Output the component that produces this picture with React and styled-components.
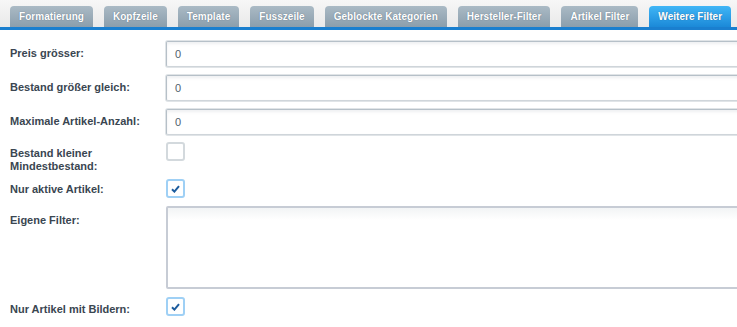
import React from "react";
import styled, { createGlobalStyle } from "styled-components";

const GlobalStyle = createGlobalStyle`
  html, body {
    margin: 0;
    padding: 0;
    background: #fff;
    overflow: hidden;
  }
  body {
    font-family: "Liberation Sans", Arial, sans-serif;
  }
`;

const Page = styled.div`
  width: 737px;
  height: 327px;
  overflow: hidden;
  background: #fff;
  font-family: "Liberation Sans", Arial, sans-serif;
`;

const TabBar = styled.div`
  display: flex;
  align-items: flex-end;
  height: 27px;
  padding-left: 10px;
  background: linear-gradient(#f7f7f7, #e9e9e9);
  border-bottom: 3px solid #1a7fcf;
  white-space: nowrap;
`;

const Tab = styled.div`
  height: 21px;
  line-height: 22px;
  padding: 0 9px;
  margin-right: 11px;
  border-radius: 4px 4px 0 0;
  font-size: 10px;
  letter-spacing: 0.04px;
  font-weight: bold;
  color: #fff;
  text-shadow: 0 0 1px rgba(40, 60, 80, 0.6);
  background: ${({ $active }) =>
    $active
      ? "linear-gradient(#40b6f6, #1b89d8)"
      : "linear-gradient(#aabac5, #8b9eac)"};
`;

const Form = styled.div`
  display: flex;
  flex-direction: column;
  gap: 8px;
  padding-top: 11px;
`;

const Row = styled.div`
  display: flex;
  align-items: flex-start;
  margin-top: ${({ $shift = 0 }) => $shift}px;
`;

const Label = styled.div`
  flex: 0 0 146px;
  padding: ${({ $pad }) => $pad}px 0 0 10px;
  box-sizing: content-box;
  margin-right: 10px;
  font-size: 11px;
  line-height: 13px;
  font-weight: bold;
  color: #3a4651;
`;

const TextInput = styled.div`
  box-sizing: border-box;
  width: 640px;
  height: 26px;
  flex-shrink: 0;
  border: 1px solid #b6c0c8;
  border-bottom-color: #cfd5da;
  box-shadow: 0 0 0 1px #e0e4e7, inset 0 2px 3px rgba(120, 135, 145, 0.12);
  border-radius: 2px;
  padding: 0 8px;
  font-size: 11px;
  line-height: 24px;
  color: #50606c;
  background: #fff;
`;

const TextArea = styled.div`
  box-sizing: border-box;
  width: 640px;
  height: 83px;
  flex-shrink: 0;
  border: 2px solid #c7ccd5;
  border-radius: 2px;
  background: linear-gradient(#f2f4f5, #fff 12px);
`;

const Box = styled.div`
  box-sizing: border-box;
  width: 19px;
  height: 19px;
  border-radius: 3px;
  border: 2px solid ${({ $checked }) => ($checked ? "#9fd0f5" : "#d3d9dd")};
  background: #fff;
  display: flex;
  align-items: center;
  justify-content: center;
`;

const Check = () => (
  <svg width="9" height="8" viewBox="0 0 9 8">
    <path d="M1 4.2 L3.4 6.6 L8 1.2" fill="none" stroke="#1c5c9e" strokeWidth="2" />
  </svg>
);

const Checkbox = ({ checked }) => (
  <Box $checked={checked}>{checked && <Check />}</Box>
);

const tabs = [
  "Formatierung",
  "Kopfzeile",
  "Template",
  "Fusszeile",
  "Geblockte Kategorien",
  "Hersteller-Filter",
  "Artikel Filter",
  "Weitere Filter",
];

export default function App() {
  return (
    <Page>
      <GlobalStyle />
      <TabBar>
        {tabs.map((t) => (
          <Tab key={t} $active={t === "Weitere Filter"}>
            {t}
          </Tab>
        ))}
      </TabBar>
      <Form>
        <Row>
          <Label $pad={6}>Preis grösser:</Label>
          <TextInput>0</TextInput>
        </Row>
        <Row>
          <Label $pad={6}>Bestand größer gleich:</Label>
          <TextInput>0</TextInput>
        </Row>
        <Row>
          <Label $pad={6}>Maximale Artikel-Anzahl:</Label>
          <TextInput>0</TextInput>
        </Row>
        <Row $shift={-1}>
          <Label $pad={5}>
            Bestand kleiner
            <br />
            Mindestbestand:
          </Label>
          <Checkbox />
        </Row>
        <Row $shift={-2}>
          <Label $pad={4}>Nur aktive Artikel:</Label>
          <Checkbox checked />
        </Row>
        <Row>
          <Label $pad={8}>Eigene Filter:</Label>
          <TextArea />
        </Row>
        <Row>
          <Label $pad={6}>Nur Artikel mit Bildern:</Label>
          <Checkbox checked />
        </Row>
      </Form>
    </Page>
  );
}
